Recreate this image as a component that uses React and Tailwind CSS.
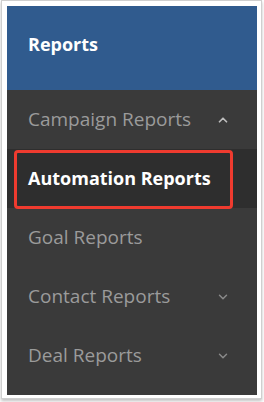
import { ChevronUp, ChevronDown } from "lucide-react";

const items = [
  { label: "Campaign Reports", icon: "up" },
  { label: "Automation Reports", active: true },
  { label: "Goal Reports" },
  { label: "Contact Reports", icon: "down" },
  { label: "Deal Reports", icon: "down" },
];

export default function App() {
  return (
    <div className="w-[264px] h-[402px] bg-white pl-[1px]" style={{ fontFamily: '"Open Sans", sans-serif' }}>
      <div className="w-[261px] h-[399px] border border-[#cfcfcf] bg-white px-[5px] pt-[5px] shadow-[0_2px_3px_rgba(0,0,0,0.25)]">
        <div className="flex h-[389px] w-[250px] flex-col bg-[#3a3a3a]">
          <div className="flex h-[84px] items-center bg-[#305b8e] pl-[21px] pb-[8px]">
            <span className="text-[18px] font-bold text-white">Reports</span>
          </div>
          <nav className="flex flex-col">
            {items.map((item) => (
              <div
                key={item.label}
                className={`relative flex h-[59px] items-center justify-between pl-[21px] pr-[27px] ${
                  item.active ? "bg-[#2e2e2e]" : ""
                }`}
              >
                {item.active && (
                  <div className="absolute left-[7px] top-[1px] h-[59px] w-[219px] rounded-[4px] border-[3px] border-[#ef3b2f]" />
                )}
                <span
                  className={
                    item.active
                      ? "text-[18px] font-bold text-white"
                      : "text-[19px] text-[#9b9b9b]"
                  }
                >
                  {item.label}
                </span>
                {item.icon === "up" && <ChevronUp className="h-[14px] w-[14px] text-[#bdbdbd]" strokeWidth={3} />}
                {item.icon === "down" && <ChevronDown className="h-[14px] w-[14px] text-[#8a8a8a]" strokeWidth={2.5} />}
              </div>
            ))}
          </nav>
        </div>
      </div>
    </div>
  );
}
